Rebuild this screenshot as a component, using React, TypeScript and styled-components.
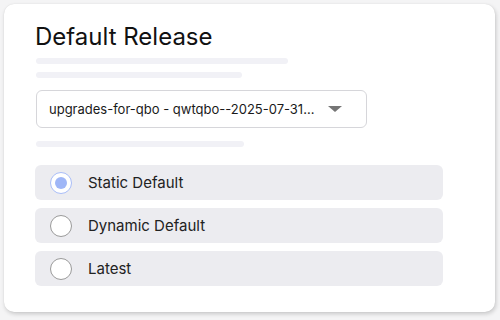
import { FC } from "react";
import styled, { createGlobalStyle } from "styled-components";

const GlobalStyle = createGlobalStyle`
  html, body {
    margin: 0;
    padding: 0;
    background: #f4f4f5;
    font-family: Inter, "Noto Sans", sans-serif;
  }
`;

const Page = styled.div`
  width: 500px;
  height: 320px;
  padding: 4px 5px 8px 4px;
  box-sizing: border-box;
`;

const Card = styled.div`
  background: #fff;
  border-radius: 10px;
  height: 100%;
  box-sizing: border-box;
  box-shadow: 1px 2px 4px rgba(0, 0, 0, 0.18), 0 0 1px rgba(0, 0, 0, 0.12);
  padding: 19px 52px 0 31px;
`;

const Title = styled.h1`
  margin: 0;
  font-size: 24px;
  font-weight: 400;
  color: #111;
  line-height: 28px;
`;

const Skeleton = styled.div<{ $w: number }>`
  width: ${(p) => p.$w}px;
  height: 6px;
  border-radius: 3px;
  background: #f1f1f6;
  margin-left: 1px;
`;

const SkeletonGroup = styled.div<{ $top: number }>`
  display: flex;
  flex-direction: column;
  gap: 8px;
  margin-top: ${(p) => p.$top}px;
`;

const Select = styled.div`
  margin: 12px 0 0 1px;
  width: 331px;
  height: 38px;
  box-sizing: border-box;
  border: 1px solid #d6d6da;
  border-radius: 6px;
  display: flex;
  align-items: center;
  padding: 0 0 0 12px;
  font-size: 13px;
  color: #1a1a1a;
  gap: 14px;
`;

const SelectText = styled.span`
  white-space: nowrap;
`;

const Caret = styled.span`
  width: 0;
  height: 0;
  border-left: 7px solid transparent;
  border-right: 7px solid transparent;
  border-top: 6px solid #757575;
`;

const Options = styled.div`
  margin-top: 18px;
  display: flex;
  flex-direction: column;
  gap: 8px;
`;

const Option = styled.label`
  height: 35px;
  border-radius: 6px;
  background: #ececf0;
  display: flex;
  align-items: center;
  padding-left: 15px;
  gap: 16px;
  font-size: 15px;
  color: #222;
`;

const Radio = styled.span<{ $on?: boolean }>`
  width: 22px;
  height: 22px;
  box-sizing: border-box;
  border-radius: 50%;
  background: #fff;
  border: 1px solid ${(p) => (p.$on ? "#a9bdf8" : "#9a9a9a")};
  display: flex;
  align-items: center;
  justify-content: center;
  &::after {
    content: "";
    display: ${(p) => (p.$on ? "block" : "none")};
    width: 12px;
    height: 12px;
    border-radius: 50%;
    background: #9fb6f7;
  }
`;

const options = ["Static Default", "Dynamic Default", "Latest"];

const App: FC = () => (
  <>
    <GlobalStyle />
    <Page>
      <Card>
        <Title>Default Release</Title>
        <SkeletonGroup $top={7}>
          <Skeleton $w={252} />
          <Skeleton $w={206} />
        </SkeletonGroup>
        <Select>
          <SelectText>upgrades-for-qbo - qwtqbo--2025-07-31...</SelectText>
          <Caret />
        </Select>
        <SkeletonGroup $top={13}>
          <Skeleton $w={208} />
        </SkeletonGroup>
        <Options>
          {options.map((o, i) => (
            <Option key={o}>
              <Radio $on={i === 0} />
              {o}
            </Option>
          ))}
        </Options>
      </Card>
    </Page>
  </>
);

export default App;
